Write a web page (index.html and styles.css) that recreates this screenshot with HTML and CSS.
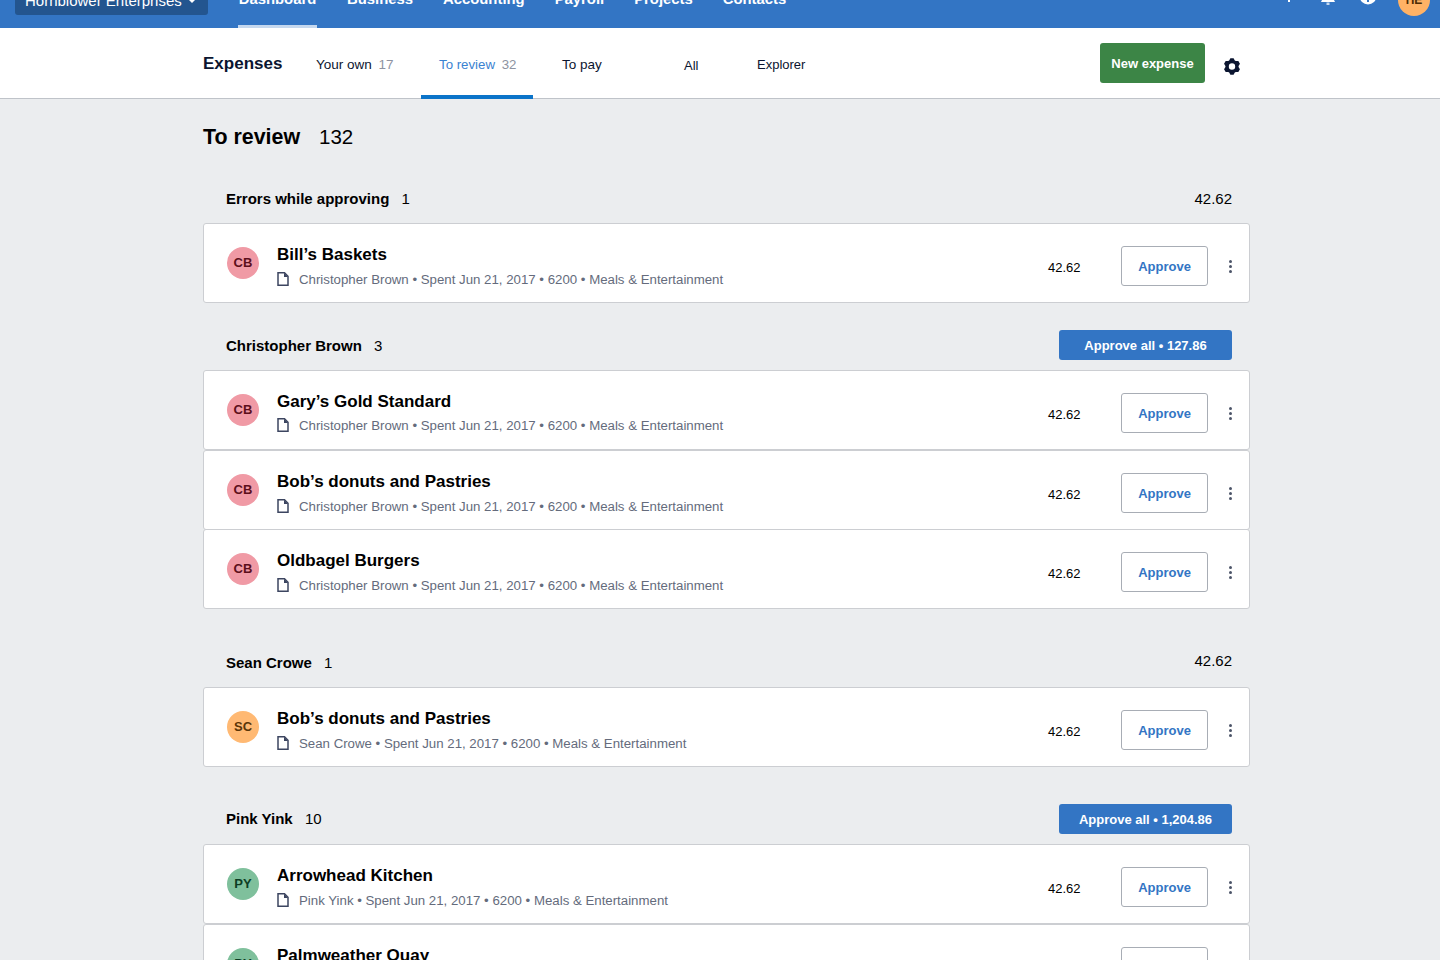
FILE: index.html
```html
<!DOCTYPE html>
<html lang="en">

<head>
    <meta charset="UTF-8">
    <title>Expenses</title>
    <link rel="stylesheet" href="styles.css">
</head>

<body>
    <header class="topbar">
        <button class="company">Hornblower Enterprises <span class="caret"></span></button>
        <nav class="mainnav">
            <a class="mainnav-item mainnav-active">Dashboard</a>
            <a class="mainnav-item">Business</a>
            <a class="mainnav-item">Accounting</a>
            <a class="mainnav-item">Payroll</a>
            <a class="mainnav-item">Projects</a>
            <a class="mainnav-item">Contacts</a>
        </nav>
        <div class="topbar-icons">
            <svg class="top-icon" width="16" height="16" viewBox="0 0 16 16"><path d="M7 1h2v6h6v2H9v6H7V9H1V7h6z" fill="#fff"/></svg>
            <svg class="top-icon" width="18" height="18" viewBox="0 0 18 18"><path d="M9 0a5 5 0 0 0-5 5v6l-2 4h14l-2-4V5a5 5 0 0 0-5-5z" fill="#fff"/><path d="M7.500 15.500h3V18h-3z" fill="#c5d8ef"/></svg>
            <svg class="top-icon top-icon-help" width="18" height="18" viewBox="0 0 18 18"><circle cx="9" cy="9" r="8.500" fill="#fff"/><rect x="8" y="8" width="2" height="7" fill="#3375c4"/></svg>
            <span class="top-avatar">HE</span>
        </div>
    </header>

    <div class="subnav">
        <div class="subnav-inner">
            <h1 class="subnav-title">Expenses</h1>
            <a class="tab tab-own">Your own <span class="tab-count">17</span></a>
            <a class="tab tab-review">To review <span class="tab-count">32</span></a>
            <a class="tab tab-pay">To pay</a>
            <a class="tab tab-all">All</a>
            <a class="tab tab-explorer">Explorer</a>
            <button class="new-expense">New expense</button>
            <svg class="gear" width="16" height="17" viewBox="0 0 16 17"><path fill-rule="evenodd" d="M6.400.25h3.200l1.190 2.270 1 .57 2.550-.1 1.600 2.770-1.370 2.170v1.140l1.370 2.170-1.600 2.770-2.550-.1-1 .57-1.190 2.270H6.400l-1.190-2.270-1-.57-2.550.1L.06 11.240l1.370-2.170V7.930L.06 5.760l1.600-2.770 2.550.1 1-.57zM8 5.300a3.200 3.200 0 1 0 0 6.400 3.200 3.200 0 0 0 0-6.400z" fill="#0b1530"/></svg>
        </div>
    </div>

    <main class="page">
        <h2 class="page-title">To review <span class="page-count">132</span></h2>

        <section class="group group-errors">
            <div class="group-head">
                <h3 class="group-name">Errors while approving <span class="group-count">1</span></h3>
                <span class="group-total">42.62</span>
            </div>
            <div class="card">
                <span class="avatar avatar-red">CB</span>
                <div class="card-info">
                    <div class="card-title">Bill’s Baskets</div>
                    <div class="card-meta">
                        <svg class="doc" width="12" height="14" viewBox="0 0 12 14"><path d="M1 .8h6.500L11 4.300V13.200H1z" fill="none" stroke="#3c4560" stroke-width="1.500"/><path d="M7 .8V5h4z" fill="#3c4560"/></svg>
                        Christopher Brown • Spent Jun 21, 2017 • 6200 • Meals &amp; Entertainment
                    </div>
                </div>
                <span class="card-amount">42.62</span>
                <button class="approve">Approve</button>
                <span class="kebab"><i></i><i></i><i></i></span>
            </div>
        </section>

        <section class="group group-chris">
            <div class="group-head">
                <h3 class="group-name">Christopher Brown <span class="group-count">3</span></h3>
                <button class="approve-all">Approve all • 127.86</button>
            </div>
            <div class="card">
                <span class="avatar avatar-red">CB</span>
                <div class="card-info">
                    <div class="card-title">Gary’s Gold Standard</div>
                    <div class="card-meta meta-tight">
                        <svg class="doc" width="12" height="14" viewBox="0 0 12 14"><path d="M1 .8h6.500L11 4.300V13.200H1z" fill="none" stroke="#3c4560" stroke-width="1.500"/><path d="M7 .8V5h4z" fill="#3c4560"/></svg>
                        Christopher Brown • Spent Jun 21, 2017 • 6200 • Meals &amp; Entertainment
                    </div>
                </div>
                <span class="card-amount">42.62</span>
                <button class="approve">Approve</button>
                <span class="kebab"><i></i><i></i><i></i></span>
            </div>
            <div class="card">
                <span class="avatar avatar-red">CB</span>
                <div class="card-info">
                    <div class="card-title">Bob’s donuts and Pastries</div>
                    <div class="card-meta">
                        <svg class="doc" width="12" height="14" viewBox="0 0 12 14"><path d="M1 .8h6.500L11 4.300V13.200H1z" fill="none" stroke="#3c4560" stroke-width="1.500"/><path d="M7 .8V5h4z" fill="#3c4560"/></svg>
                        Christopher Brown • Spent Jun 21, 2017 • 6200 • Meals &amp; Entertainment
                    </div>
                </div>
                <span class="card-amount">42.62</span>
                <button class="approve">Approve</button>
                <span class="kebab"><i></i><i></i><i></i></span>
            </div>
            <div class="card card-joined">
                <span class="avatar avatar-red">CB</span>
                <div class="card-info">
                    <div class="card-title">Oldbagel Burgers</div>
                    <div class="card-meta">
                        <svg class="doc" width="12" height="14" viewBox="0 0 12 14"><path d="M1 .8h6.500L11 4.300V13.200H1z" fill="none" stroke="#3c4560" stroke-width="1.500"/><path d="M7 .8V5h4z" fill="#3c4560"/></svg>
                        Christopher Brown • Spent Jun 21, 2017 • 6200 • Meals &amp; Entertainment
                    </div>
                </div>
                <span class="card-amount">42.62</span>
                <button class="approve">Approve</button>
                <span class="kebab"><i></i><i></i><i></i></span>
            </div>
        </section>

        <section class="group group-sean">
            <div class="group-head">
                <h3 class="group-name">Sean Crowe <span class="group-count">1</span></h3>
                <span class="group-total">42.62</span>
            </div>
            <div class="card">
                <span class="avatar avatar-orange">SC</span>
                <div class="card-info">
                    <div class="card-title">Bob’s donuts and Pastries</div>
                    <div class="card-meta">
                        <svg class="doc" width="12" height="14" viewBox="0 0 12 14"><path d="M1 .8h6.500L11 4.300V13.200H1z" fill="none" stroke="#3c4560" stroke-width="1.500"/><path d="M7 .8V5h4z" fill="#3c4560"/></svg>
                        Sean Crowe • Spent Jun 21, 2017 • 6200 • Meals &amp; Entertainment
                    </div>
                </div>
                <span class="card-amount">42.62</span>
                <button class="approve">Approve</button>
                <span class="kebab"><i></i><i></i><i></i></span>
            </div>
        </section>

        <section class="group group-pink">
            <div class="group-head">
                <h3 class="group-name">Pink Yink <span class="group-count">10</span></h3>
                <button class="approve-all">Approve all • 1,204.86</button>
            </div>
            <div class="card">
                <span class="avatar avatar-green">PY</span>
                <div class="card-info">
                    <div class="card-title">Arrowhead Kitchen</div>
                    <div class="card-meta">
                        <svg class="doc" width="12" height="14" viewBox="0 0 12 14"><path d="M1 .8h6.500L11 4.300V13.200H1z" fill="none" stroke="#3c4560" stroke-width="1.500"/><path d="M7 .8V5h4z" fill="#3c4560"/></svg>
                        Pink Yink • Spent Jun 21, 2017 • 6200 • Meals &amp; Entertainment
                    </div>
                </div>
                <span class="card-amount">42.62</span>
                <button class="approve">Approve</button>
                <span class="kebab"><i></i><i></i><i></i></span>
            </div>
            <div class="card">
                <span class="avatar avatar-green">PY</span>
                <div class="card-info">
                    <div class="card-title">Palmweather Quay</div>
                    <div class="card-meta">
                        <svg class="doc" width="12" height="14" viewBox="0 0 12 14"><path d="M1 .8h6.500L11 4.300V13.200H1z" fill="none" stroke="#3c4560" stroke-width="1.500"/><path d="M7 .8V5h4z" fill="#3c4560"/></svg>
                        Pink Yink • Spent Jun 21, 2017 • 6200 • Meals &amp; Entertainment
                    </div>
                </div>
                <span class="card-amount">42.62</span>
                <button class="approve">Approve</button>
                <span class="kebab"><i></i><i></i><i></i></span>
            </div>
        </section>
    </main>
</body>

</html>
```

FILE: styles.css
```css
* {
    box-sizing: border-box;
}

html,
body {
    height: 960px;
    overflow: hidden;
}

body {
    margin: 0;
    background-color: #ebedef;
    color: #000;
    font-family: "Liberation Sans", Arial, sans-serif;
}

button {
    font-family: inherit;
    cursor: pointer;
}

/* page is scrolled a little in the shot, so the bar starts above the window */
.topbar {
    display: flex;
    align-items: flex-start;
    height: 60px;
    margin-top: -32px;
    padding-left: 15px;
    background-color: #3375c4;
}

.company {
    flex-shrink: 0;
    width: 193px;
    height: 47px;
    padding: 17px 0 0 10px;
    border: 0;
    border-radius: 3px;
    background-color: #23558f;
    color: #fff;
    font-size: 15px;
    text-align: left;
    white-space: nowrap;
}

.caret {
    display: inline-block;
    margin-left: 3px;
    vertical-align: middle;
    border-left: 3px solid transparent;
    border-right: 3px solid transparent;
    border-top: 3px solid #fff;
}

.mainnav {
    display: flex;
    margin-left: 30px;
}

.mainnav-item {
    height: 60px;
    padding-top: 23px;
    margin-left: 30px;
    color: #fff;
    font-size: 14.850px;
    font-weight: bold;
}

.mainnav-item:first-child {
    margin-left: 0;
}

.mainnav-active {
    width: 79px;
    text-align: center;
    border-bottom: 3px solid #c5d8ef;
}

.topbar-icons {
    display: flex;
    align-items: flex-start;
    margin-left: auto;
    padding-right: 10px;
}

.top-icon {
    margin-top: 19px;
    margin-right: 22px;
}

.top-icon-help {
    margin-right: 21px;
}

.top-avatar {
    display: flex;
    align-items: center;
    justify-content: center;
    width: 32px;
    height: 32px;
    margin-top: 16px;
    border-radius: 50%;
    background-color: #ffb265;
    color: #4d2c05;
    font-size: 12px;
    font-weight: bold;
}

.subnav {
    height: 71px;
    background-color: #fff;
    border-bottom: 1px solid #bfc3c9;
}

.subnav-inner {
    display: flex;
    align-items: flex-start;
    width: 1047px;
    height: 71px;
    margin-left: 203px;
}

.subnav-title {
    width: 113px;
    margin: 26px 0 0;
    color: #0b1530;
    font-size: 17px;
    line-height: 20px;
}

.tab {
    height: 71px;
    padding-top: 29px;
    color: #0b1530;
    font-size: 13px;
    line-height: 15px;
}

.tab-count {
    margin-left: 3px;
    color: #8d93a1;
}

.tab-own {
    width: 105px;
    font-size: 13.500px;
}

.tab-review {
    width: 112px;
    padding-left: 18px;
    color: #3a82d1;
    font-size: 13.250px;
    border-bottom: 4px solid #0b74c9;
}

.tab-pay {
    width: 122px;
    margin-left: 29px;
    font-size: 13.500px;
}

.tab-all {
    width: 73px;
    padding-top: 30px;
}

.tab-explorer {
    width: 343px;
}

.new-expense {
    flex-shrink: 0;
    width: 105px;
    height: 40px;
    margin: 15px 0 0;
    padding: 0;
    border: 0;
    border-radius: 3px;
    background-color: #3c8546;
    color: #fff;
    font-size: 13px;
    font-weight: bold;
}

.gear {
    flex-shrink: 0;
    margin: 30px 0 0 19px;
}

.page {
    width: 1047px;
    margin-left: 203px;
}

.page-title {
    margin: 0;
    padding-top: 25px;
    font-size: 21.400px;
    line-height: 26px;
}

.page-count {
    margin-left: 13px;
    font-weight: normal;
    font-size: 20.500px;
}

.group-head {
    display: flex;
    align-items: center;
    justify-content: space-between;
    padding: 0 18px 0 23px;
}

.group-errors {
    margin-top: 37px;
}

.group-chris {
    margin-top: 27px;
}

.group-sean {
    margin-top: 40px;
}

.group-pink {
    margin-top: 37px;
}

.group-errors .group-head {
    height: 24px;
    margin-bottom: 12px;
}

.group-sean .group-head {
    height: 24px;
    margin-bottom: 14px;
}

.group-chris .group-head,
.group-pink .group-head {
    height: 30px;
    margin-bottom: 10px;
}

.group-name {
    margin: 0;
    font-size: 15px;
    line-height: 18px;
}

.group-chris .group-name {
    margin-top: 2px;
}

.group-sean .group-name {
    margin-top: 4px;
}

.group-count {
    margin-left: 8px;
    font-weight: normal;
    font-size: 15px;
}

.group-total {
    margin-bottom: 2px;
    font-size: 15px;
}

.card {
    display: flex;
    align-items: center;
    height: 80px;
    padding: 0 17px 0 23px;
    background-color: #fff;
    border: 1px solid #ccced2;
    border-radius: 3px;
}

.card-joined {
    margin-top: -1px;
}

.avatar {
    display: flex;
    flex-shrink: 0;
    align-items: center;
    justify-content: center;
    width: 32px;
    height: 32px;
    padding-bottom: 2px;
    border-radius: 50%;
    font-size: 13px;
    font-weight: bold;
}

.avatar-red {
    background-color: #f09aa5;
    color: #5c0f1c;
}

.avatar-orange {
    background-color: #ffb973;
    color: #5a3508;
}

.avatar-green {
    background-color: #7fc09c;
    color: #0d3d24;
}

.card-info {
    flex: 1;
    align-self: flex-start;
    margin-left: 18px;
    padding-top: 21px;
}

.card-title {
    font-size: 17px;
    font-weight: bold;
    line-height: 20px;
}

.card-meta {
    display: flex;
    align-items: center;
    margin-top: 7px;
    color: #646b7c;
    font-size: 13.250px;
    line-height: 16px;
}

.meta-tight {
    margin-top: 6px;
}

.doc {
    margin-right: 10px;
    margin-bottom: 2px;
}

.card-amount {
    width: 32px;
    margin-top: 8px;
    font-size: 13px;
}

.approve {
    width: 87px;
    height: 40px;
    margin-top: 6px;
    margin-left: 41px;
    padding: 0;
    background-color: #fff;
    border: 1px solid #a8adb5;
    border-radius: 3px;
    color: #3375c4;
    font-size: 13px;
    font-weight: bold;
}

.kebab {
    display: flex;
    flex-direction: column;
    gap: 2px;
    margin-top: 6px;
    margin-left: 21px;
}

.kebab i {
    width: 3px;
    height: 3px;
    border-radius: 50%;
    background-color: #4c5468;
}

.approve-all {
    width: 173px;
    height: 30px;
    padding: 0;
    border: 0;
    border-radius: 3px;
    background-color: #3375c4;
    color: #fff;
    font-size: 13px;
    font-weight: bold;
}
```
